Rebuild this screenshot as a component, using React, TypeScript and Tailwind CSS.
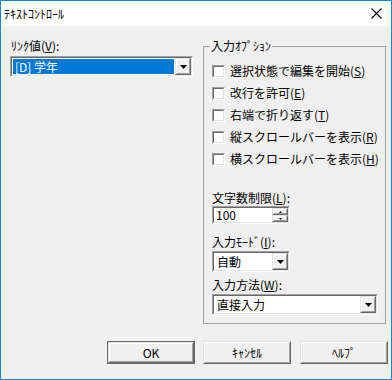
import React from 'react';

const Sunken = ({ className = '', children }: { className?: string; children?: React.ReactNode }) => (
  <div className={`border border-t-[#a0a0a0] border-l-[#a0a0a0] border-r-white border-b-white ${className}`}>
    <div className="h-full border border-t-[#696969] border-l-[#696969] border-r-[#e3e3e3] border-b-[#e3e3e3] bg-white flex">
      {children}
    </div>
  </div>
);

const Raised = ({ className = '', children }: { className?: string; children?: React.ReactNode }) => (
  <div className={`border border-t-[#e3e3e3] border-l-[#e3e3e3] border-r-[#696969] border-b-[#696969] ${className}`}>
    <div className="h-full border border-t-white border-l-white border-r-[#a0a0a0] border-b-[#a0a0a0] bg-[#f0f0f0] flex items-center justify-center">
      {children}
    </div>
  </div>
);

const Arrow = () => (
  <svg width="7" height="4" viewBox="0 0 7 4">
    <path d="M0 0h7L3.5 4z" fill="#000" />
  </svg>
);

const Combo = ({ width, text, selected }: { width: string; text: string; selected?: boolean }) => (
  <Sunken className={`${width} h-[21px]`}>
    <div className="flex-1 flex items-center p-[1px]">
      <div className={`h-full w-full flex items-center px-[2px] ${selected ? 'bg-[#0078d7] text-white' : ''}`}>
        {text}
      </div>
    </div>
    <Raised className="w-[16px] h-full">
      <Arrow />
    </Raised>
  </Sunken>
);

const Key = ({ k }: { k: string }) => <span className="underline underline-offset-[1px]">{k}</span>;

const Check = ({ label, k }: { label: string; k: string }) => (
  <div className="h-[22px] flex items-center gap-[5px]">
    <Sunken className="w-[13px] h-[13px]" />
    <span>
      {label}(<Key k={k} />)
    </span>
  </div>
);

export default function App() {
  return (
    <div className="w-[392px] h-[380px] border border-[#1883d7] bg-[#f0f0f0] flex flex-col text-[12px] leading-[14px] text-black font-['Noto_Sans_CJK_JP',sans-serif]">
      {/* Title bar */}
      <div className="h-[25px] bg-white flex items-center justify-between pl-[3px] pr-[9px]">
        <span>ﾃｷｽﾄｺﾝﾄﾛｰﾙ</span>
        <svg width="11" height="11" viewBox="0 0 11 11">
          <path d="M0.5 0.5l10 10M10.5 0.5l-10 10" stroke="#000" strokeWidth="1.1" />
        </svg>
      </div>

      <div className="flex pl-[9px] pt-[13px]">
        {/* Left column */}
        <div className="w-[183px] flex flex-col">
          <div className="pl-[1px]">
            ﾘﾝｸ値(<Key k="V" />):
          </div>
          <div className="mt-[3px]">
            <Combo width="w-[183px]" text="[D] 学年" selected />
          </div>
        </div>

        {/* Group box */}
        <fieldset className="ml-[10px] w-[183px] h-[285px] border border-[#a0a0a0]">
          <legend className="ml-[6px] px-[1px] leading-[14px]">入力ｵﾌﾟｼｮﾝ</legend>
          <div className="flex flex-col pl-[8px] pt-[7px]">
            <Check label="選択状態で編集を開始" k="S" />
            <Check label="改行を許可" k="E" />
            <Check label="右端で折り返す" k="T" />
            <Check label="縦スクロールバーを表示" k="R" />
            <Check label="横スクロールバーを表示" k="H" />

            <div className="mt-[21px]">
              文字数制限(<Key k="L" />):
            </div>
            <Sunken className="mt-[1px] w-[78px] h-[18px]">
              <div className="flex-1 flex items-center px-[2px]">100</div>
              <div className="w-[16px] flex flex-col">
                <Raised className="flex-1">
                  <svg width="3" height="2" viewBox="0 0 3 2">
                    <path d="M0 2h3L1.5 0z" fill="#000" />
                  </svg>
                </Raised>
                <Raised className="flex-1">
                  <svg width="3" height="2" viewBox="0 0 3 2">
                    <path d="M0 0h3L1.5 2z" fill="#000" />
                  </svg>
                </Raised>
              </div>
            </Sunken>

            <div className="mt-[11px]">
              入力ﾓｰﾄﾞ(<Key k="I" />):
            </div>
            <div className="mt-[2px]">
              <Combo width="w-[78px]" text="自動" />
            </div>

            <div className="mt-[6px]">
              入力方法(<Key k="W" />):
            </div>
            <div className="mt-[2px]">
              <Combo width="w-[166px]" text="直接入力" />
            </div>
          </div>
        </fieldset>
      </div>

      {/* Buttons */}
      <div className="flex justify-end gap-[8px] pr-[3px] mt-[17px]">
        <div className="border border-[#696969]">
          <Raised className="w-[86px] h-[21px]">OK</Raised>
        </div>
        <Raised className="w-[88px] h-[23px]">ｷｬﾝｾﾙ</Raised>
        <Raised className="w-[88px] h-[23px] ml-[1px]">ﾍﾙﾌﾟ</Raised>
      </div>
    </div>
  );
}
